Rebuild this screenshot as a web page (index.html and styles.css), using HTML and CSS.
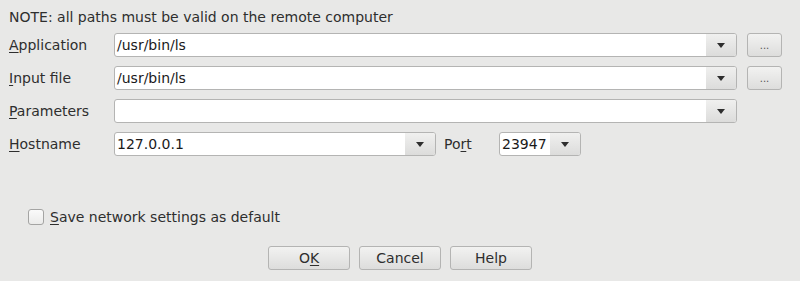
FILE: index.html
```html
<!DOCTYPE html>
<html lang="en">
<head>
  <meta charset="UTF-8" />
  <title>Debug application setup</title>
  <link rel="stylesheet" href="styles.css">
</head>
<body>
  <div class="dialog">
    <div class="note">NOTE: all paths must be valid on the remote computer</div>

    <div class="form">
      <div class="row">
        <label class="label"><u>A</u>pplication</label>
        <div class="combo wide">
          <span class="combo-text">/usr/bin/ls</span>
          <span class="combo-btn"><span class="arrow"></span></span>
        </div>
        <button class="btn browse">...</button>
      </div>

      <div class="row">
        <label class="label"><u>I</u>nput file</label>
        <div class="combo wide">
          <span class="combo-text">/usr/bin/ls</span>
          <span class="combo-btn"><span class="arrow"></span></span>
        </div>
        <button class="btn browse">...</button>
      </div>

      <div class="row">
        <label class="label"><u>P</u>arameters</label>
        <div class="combo wide">
          <span class="combo-text"></span>
          <span class="combo-btn"><span class="arrow"></span></span>
        </div>
      </div>

      <div class="row">
        <label class="label"><u>H</u>ostname</label>
        <div class="combo host">
          <span class="combo-text">127.0.0.1</span>
          <span class="combo-btn"><span class="arrow"></span></span>
        </div>
        <label class="port-label">Po<u>r</u>t</label>
        <div class="combo port">
          <span class="combo-text">23947</span>
          <span class="combo-btn"><span class="arrow"></span></span>
        </div>
      </div>
    </div>

    <div class="check-row">
      <span class="checkbox"></span>
      <span><u>S</u>ave network settings as default</span>
    </div>

    <div class="buttons">
      <button class="btn action">O<u>K</u></button>
      <button class="btn action">Cancel</button>
      <button class="btn action">Help</button>
    </div>
  </div>
</body>
</html>
```

FILE: styles.css
```css
* {
  margin: 0;
  padding: 0;
  box-sizing: border-box;
}

body {
  background: #e8e8e7;
  color: #2e2e2e;
  font-family: 'DejaVu Sans', 'Liberation Sans', sans-serif;
  font-size: 14px;
}

u {
  text-decoration-thickness: 1px;
  text-underline-offset: 2px;
}

.dialog {
  padding: 6px 18px 0 9px;
}

.note {
  line-height: 22px;
}

/* === Form rows === */
.form {
  margin-top: 5px;
  display: flex;
  flex-direction: column;
  gap: 9px;
}

.row {
  display: flex;
  align-items: center;
  height: 24px;
}

.label {
  width: 105px;
  flex-shrink: 0;
}

.combo {
  display: flex;
  height: 24px;
  border: 1px solid #b4b4b3;
  border-radius: 3px;
  background: #fff;
  overflow: hidden;
}

.combo.wide { width: 623px; }
.combo.host { width: 322px; }
.combo.port { width: 82px; }

.combo-text {
  flex: 1;
  padding-left: 2px;
  line-height: 22px;
  color: #1a1a1a;
}

.combo-btn {
  width: 30px;
  display: flex;
  align-items: center;
  justify-content: center;
  background: linear-gradient(#f0f0ef, #dcdcdb);
}

.arrow {
  width: 0;
  height: 0;
  border-left: 4.5px solid transparent;
  border-right: 4.5px solid transparent;
  border-top: 5px solid #2e2e2e;
}

.port-label {
  margin-left: 8px;
  width: 55px;
}

/* === Buttons === */
.btn {
  font-family: inherit;
  font-size: 14px;
  color: #2e2e2e;
  height: 24px;
  border: 1px solid #b4b4b3;
  border-radius: 3px;
  background: linear-gradient(#f2f2f1, #dddddc);
}

.browse {
  width: 35px;
  margin-left: 10px;
  font-size: 10px;
  color: #555;
}

.check-row {
  margin-top: 49px;
  padding-left: 19px;
  height: 24px;
  display: flex;
  align-items: center;
  gap: 6px;
}

.checkbox {
  width: 16px;
  height: 16px;
  border: 1px solid #a4a4a3;
  border-radius: 3px;
  background: linear-gradient(#fafafa, #ebebea);
}

.buttons {
  margin-top: 17px;
  display: flex;
  justify-content: center;
  gap: 9px;
  padding-left: 9px;
}

.action {
  width: 82px;
}
```
